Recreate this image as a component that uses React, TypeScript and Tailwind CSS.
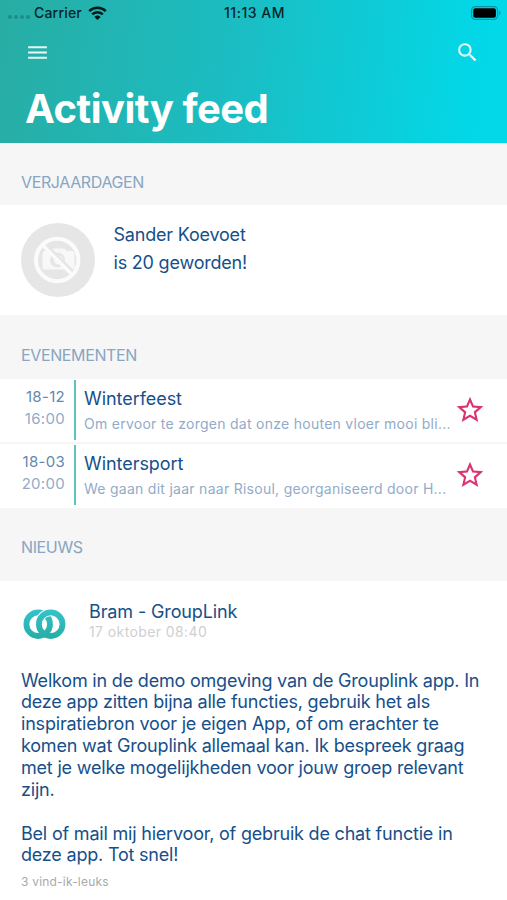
import React, { FC } from "react";
import { MdMenu, MdSearch, MdStarBorder } from "react-icons/md";

interface EventItem {
    date: string;
    time: string;
    title: string;
    desc: string;
}

const events: EventItem[] = [
    {
        date: "18-12",
        time: "16:00",
        title: "Winterfeest",
        desc: "Om ervoor te zorgen dat onze houten vloer mooi bli...",
    },
    {
        date: "18-03",
        time: "20:00",
        title: "Wintersport",
        desc: "We gaan dit jaar naar Risoul, georganiseerd door H...",
    },
];

const StatusBar = () => (
    <div className="grid grid-cols-3 items-center h-[26px] pb-px pl-2 pr-[6px] text-[14px] font-medium text-[#06252a]">
        <div className="flex items-center">
            <div className="flex gap-[2px] mt-2 mr-[4px]">
                <span className="w-1 h-1 rounded-full bg-[#1b8d8a]" />
                <span className="w-1 h-1 rounded-full bg-[#1b8d8a]" />
                <span className="w-1 h-1 rounded-full bg-[#1b8d8a]" />
                <span className="w-1 h-1 rounded-full bg-[#1b8d8a]" />
            </div>
            <span className="tracking-[0.2px]">Carrier</span>
            <svg className="ml-[6px]" width="19" height="14" viewBox="0 0 19 14" fill="none" stroke="#03181b" strokeWidth="2.5">
                <path d="M1.2 5.2a11.8 11.8 0 0 1 16.6 0" />
                <path d="M4.2 8.4a7.5 7.5 0 0 1 10.6 0" />
                <path d="M9.5 14 6.4 10.9a4.4 4.4 0 0 1 6.2 0Z" fill="#03181b" stroke="none" />
            </svg>
        </div>
        <span className="text-center tracking-[0.5px]">11:13 AM</span>
        <svg className="justify-self-end" width="30" height="14" viewBox="0 0 30 14">
            <rect x=".6" y=".6" width="26" height="12.8" rx="3.6" fill="none" stroke="#0494a3" strokeWidth="1.2" />
            <rect x="2.3" y="2.3" width="22.6" height="9.4" rx="2" fill="#000" />
            <path d="M28.2 4.8a2.4 2.4 0 0 1 0 4.4Z" fill="#0494a3" />
        </svg>
    </div>
);

const SectionTitle: FC<{ title: string; className?: string }> = ({ title, className = "h-[64px] pt-[30px]" }) => (
    <h2 className={`bg-[#f6f6f6] pl-[21px] text-[16px] leading-5 tracking-[-0.37px] text-[#88a5c3] ${className}`}>
        {title}
    </h2>
);

const NoPhoto = () => (
    <div className="w-[74px] h-[74px] rounded-full bg-[#e6e6e6] shrink-0">
        <svg width="74" height="74" viewBox="0 0 74 74">
            <path d="M23 28h6l3-2.500h11l3 2.500h5a2.500 2.500 0 0 1 2.500 2.500V44a2.500 2.500 0 0 1-2.500 2.500H24a2.500 2.500 0 0 1-2.500-2.500V30Z" fill="#f8f8f8" />
            <circle cx="36.500" cy="37" r="7.500" fill="#e6e6e6" />
            <circle cx="37.500" cy="37" r="4.500" fill="#f8f8f8" />
            <path d="m23.500 21.500 28 28" stroke="#e6e6e6" strokeWidth="5" />
            <circle cx="36.200" cy="37" r="21.200" fill="none" stroke="#fbfbfb" strokeWidth="4" />
            <path d="m21.500 22 30 30" stroke="#fbfbfb" strokeWidth="3.400" />
        </svg>
    </div>
);

const GroupLogo = () => (
    <svg width="43" height="31" viewBox="0 0 43 31" fill="none">
        <defs>
            <linearGradient id="ring" x1="0" y1="0" x2="0" y2="31" gradientUnits="userSpaceOnUse">
                <stop stopColor="#35c3cc" />
                <stop offset="1" stopColor="#25ada3" />
            </linearGradient>
        </defs>
        <circle cx="15.200" cy="15.200" r="11.800" stroke="url(#ring)" strokeWidth="5.800" />
        <path d="M15.900 15.200a11.800 11.800 0 0 1 11.800-11.800" stroke="#fff" strokeWidth="7.800" />
        <path d="M24.500 6.500q2.800 3.600 3 8.700" stroke="#fff" strokeWidth="1.200" transform="translate(4.500 0)" />
        <circle cx="27.700" cy="15.200" r="11.800" stroke="url(#ring)" strokeWidth="5.800" />
    </svg>
);

const EventRow: FC<EventItem> = ({ date, time, title, desc }) => (
    <div className="flex h-[65px] items-start border-b-2 border-[#f6f6f6] last:h-[64px] last:border-b-0">
        <div className="w-[65px] pt-[7px] text-right text-[15px] leading-[22px] tracking-[0.3px]">
            <p className="text-[#6487b0]">{date}</p>
            <p className="text-[#92abc9]">{time}</p>
        </div>
        <div className="ml-[9px] mt-[1px] w-[2px] h-[60px] bg-[#5cc3bf]" />
        <div className="ml-2 pt-[8px] w-[368px] whitespace-nowrap">
            <h3 className="text-[18px] leading-6 tracking-[-0.05px] text-[#164f8a]">{title}</h3>
            <p className="mt-[3px] text-[14px] leading-5 tracking-[0.27px] text-[#92abc9]">{desc}</p>
        </div>
        <MdStarBorder size={32} className="mt-[15px] ml-[2px] shrink-0 text-[#db3474]" />
    </div>
);

const App = () => {
    return (
        <div className="w-[507px] h-[900px] overflow-hidden bg-white font-['Inter',sans-serif] text-[#164f8a]">
            {/* Header */}
            <header className="h-[143px] bg-linear-[97deg,#28ada4_0%,#1abec4_48%,#02d8e8_94%]">
                <StatusBar />
                <div className="flex justify-between pt-[14px] pl-[25px] pr-[27px] text-white/90">
                    <MdMenu size={25} />
                    <MdSearch size={25} />
                </div>
                <h1 className="pl-[25px] mt-[20px] text-[40px] leading-[48px] tracking-[-0.5px] font-bold text-white whitespace-nowrap">Activity feed</h1>
            </header>

            {/* Birthdays */}
            <SectionTitle title="VERJAARDAGEN" className="h-[62px] pt-[29px]" />
            <div className="flex h-[110px] pl-[20.5px] pt-[17.5px] gap-[19px]">
                <NoPhoto />
                <div className="-mt-[2px] text-[18px] leading-7 tracking-[-0.2px] whitespace-nowrap">
                    <p>Sander Koevoet</p>
                    <p>is 20 geworden!</p>
                </div>
            </div>

            {/* Events */}
            <SectionTitle title="EVENEMENTEN" />
            <div>
                {events.map((event) => (
                    <EventRow key={event.title} {...event} />
                ))}
            </div>

            {/* News */}
            <SectionTitle title="NIEUWS" className="h-[73px] pt-[29px]" />
            <article className="pl-[21px]">
                <div className="flex pt-[20px] gap-[23px] pl-[2px]">
                    <div className="pt-[8px]">
                        <GroupLogo />
                    </div>
                    <div className="whitespace-nowrap">
                        <h3 className="text-[18px] leading-[22px] tracking-[-0.12px]">Bram - GroupLink</h3>
                        <p className="text-[14px] leading-[18px] text-[#cfcfcf] tracking-[0.4px]">17 oktober 08:40</p>
                    </div>
                </div>
                <div className="mt-[28.6px] text-[18px] leading-[21.85px] tracking-[-0.2px] whitespace-nowrap">
                    <p>
                        Welkom in de demo omgeving van de Grouplink app. In<br />
                        deze app zitten bijna alle functies, gebruik het als<br />
                        inspiratiebron voor je eigen App, of om erachter te<br />
                        komen wat Grouplink allemaal kan. Ik bespreek graag<br />
                        met je welke mogelijkheden voor jouw groep relevant<br />
                        zijn.
                    </p>
                    <p className="mt-[21.85px]">
                        Bel of mail mij hiervoor, of gebruik de chat functie in<br />
                        deze app. Tot snel!
                    </p>
                </div>
                <p className="mt-[7.4px] text-[12px] leading-4 tracking-[0.2px] text-[#a9a9a9]">3 vind-ik-leuks</p>
            </article>
        </div>
    );
};

export default App;
